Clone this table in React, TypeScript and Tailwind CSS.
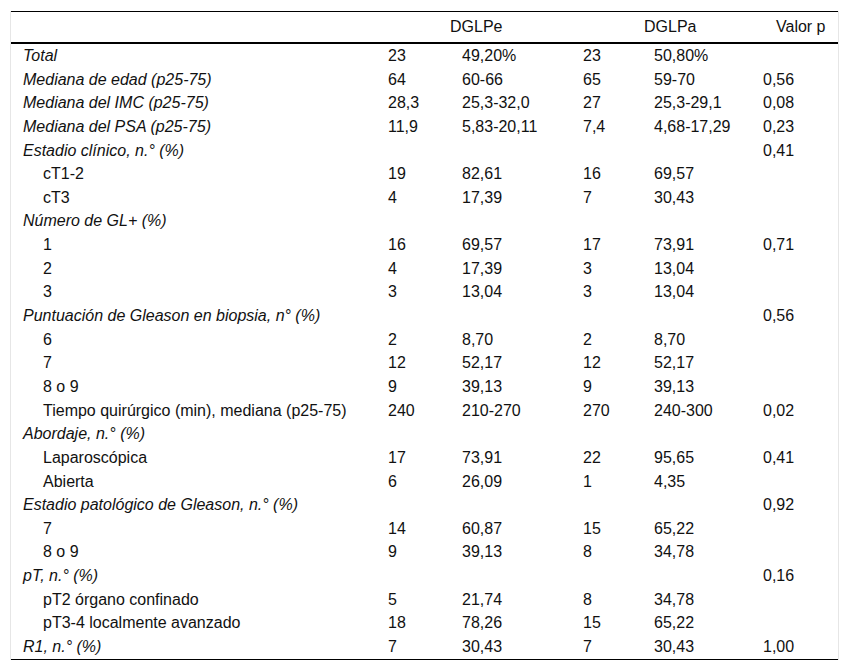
type Row = {
  label: string;
  sub?: boolean;
  v: string[];
};

const rows: Row[] = [
  { label: "Total", v: ["23", "49,20%", "23", "50,80%", ""] },
  { label: "Mediana de edad (p25-75)", v: ["64", "60-66", "65", "59-70", "0,56"] },
  { label: "Mediana del IMC (p25-75)", v: ["28,3", "25,3-32,0", "27", "25,3-29,1", "0,08"] },
  { label: "Mediana del PSA (p25-75)", v: ["11,9", "5,83-20,11", "7,4", "4,68-17,29", "0,23"] },
  { label: "Estadio clínico, n.° (%)", v: ["", "", "", "", "0,41"] },
  { label: "cT1-2", sub: true, v: ["19", "82,61", "16", "69,57", ""] },
  { label: "cT3", sub: true, v: ["4", "17,39", "7", "30,43", ""] },
  { label: "Número de GL+ (%)", v: ["", "", "", "", ""] },
  { label: "1", sub: true, v: ["16", "69,57", "17", "73,91", "0,71"] },
  { label: "2", sub: true, v: ["4", "17,39", "3", "13,04", ""] },
  { label: "3", sub: true, v: ["3", "13,04", "3", "13,04", ""] },
  { label: "Puntuación de Gleason en biopsia, n° (%)", v: ["", "", "", "", "0,56"] },
  { label: "6", sub: true, v: ["2", "8,70", "2", "8,70", ""] },
  { label: "7", sub: true, v: ["12", "52,17", "12", "52,17", ""] },
  { label: "8 o 9", sub: true, v: ["9", "39,13", "9", "39,13", ""] },
  { label: "Tiempo quirúrgico (min), mediana (p25-75)", sub: true, v: ["240", "210-270", "270", "240-300", "0,02"] },
  { label: "Abordaje, n.° (%)", v: ["", "", "", "", ""] },
  { label: "Laparoscópica", sub: true, v: ["17", "73,91", "22", "95,65", "0,41"] },
  { label: "Abierta", sub: true, v: ["6", "26,09", "1", "4,35", ""] },
  { label: "Estadio patológico de Gleason, n.° (%)", v: ["", "", "", "", "0,92"] },
  { label: "7", sub: true, v: ["14", "60,87", "15", "65,22", ""] },
  { label: "8 o 9", sub: true, v: ["9", "39,13", "8", "34,78", ""] },
  { label: "pT, n.° (%)", v: ["", "", "", "", "0,16"] },
  { label: "pT2 órgano confinado", sub: true, v: ["5", "21,74", "8", "34,78", ""] },
  { label: "pT3-4 localmente avanzado", sub: true, v: ["18", "78,26", "15", "65,22", ""] },
  { label: "R1, n.° (%)", v: ["7", "30,43", "7", "30,43", "1,00"] },
];

const cols = "grid grid-cols-[367px_74px_121px_71px_109px_87px]";

export default function App() {
  return (
    <div className="bg-white w-[850px] h-[672px] pt-[11px] pl-[10px] font-['Liberation_Sans',Arial,sans-serif] text-[16px] text-[#111]">
      <div className="w-[829px] border-x border-[#e6e6e6]">
        <div className="border-t border-black border-b-2">
          <div className="grid grid-cols-[367px_195px_180px_87px] h-[30px] items-center">
            <div />
            <div className="pl-[72px]">DGLPe</div>
            <div className="pl-[71px]">DGLPa</div>
            <div className="pl-[23px] whitespace-nowrap">Valor p</div>
          </div>
        </div>
        <div className="border-b border-black">
          {rows.map((r, i) => (
            <div key={i} className={`${cols} h-[23.65px] items-center`}>
              <div className={r.sub ? "pl-[32px]" : "pl-[12px] italic"}>{r.label}</div>
              {r.v.map((x, j) => (
                <div key={j} className="pl-[10px]">
                  {x}
                </div>
              ))}
            </div>
          ))}
        </div>
      </div>
    </div>
  );
}
